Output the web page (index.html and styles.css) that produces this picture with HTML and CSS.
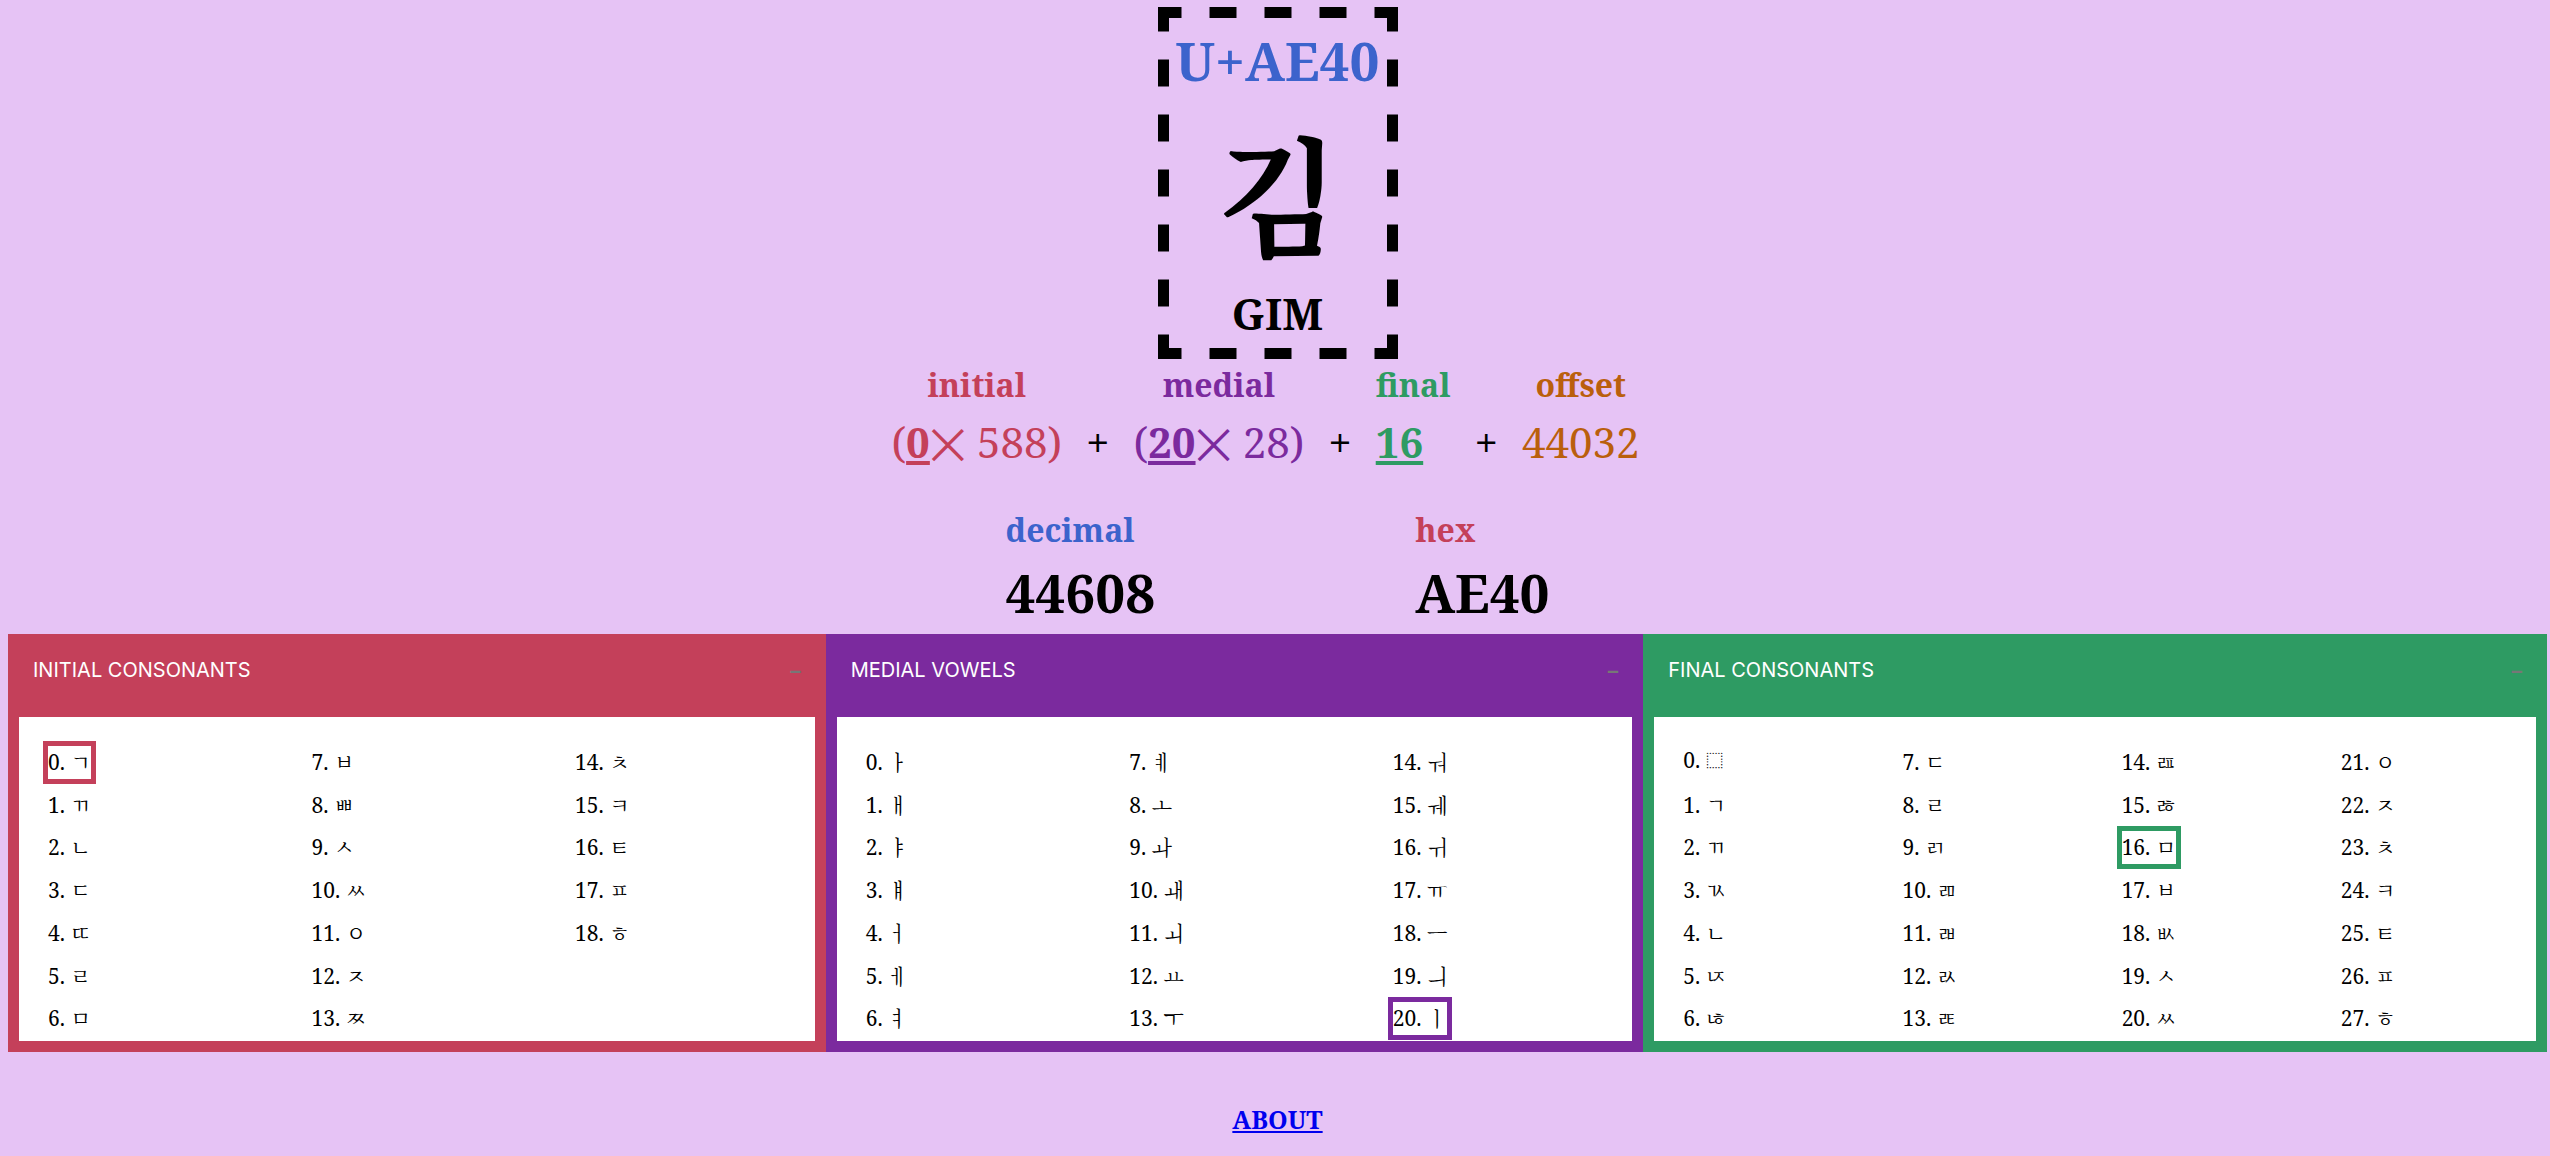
FILE: index.html
```
<!DOCTYPE html>
<html lang="en">
<head>
<meta charset="utf-8">
<title>Hangul syllable composer</title>
<link rel="stylesheet" href="styles.css">
</head>
<body>
<main>
  <section class="card">
    <h1 class="codepoint">U+AE40</h1>
    <div class="syllable" lang="ko">김</div>
    <h2 class="roman">GIM</h2>
  </section>

  <section class="formula">
    <div class="term initial"><h3 class="label">initial</h3><p class="value">(<b>0</b>✕ 588)</p></div>
    <span class="plus">+</span>
    <div class="term medial"><h3 class="label">medial</h3><p class="value">(<b>20</b>✕ 28)</p></div>
    <span class="plus">+</span>
    <div class="term final"><h3 class="label">final</h3><p class="value"><b>16</b></p></div>
    <span class="plus">+</span>
    <div class="term offset"><h3 class="label">offset</h3><p class="value">44032</p></div>
  </section>

  <section class="results">
    <div class="result decimal"><h3 class="label">decimal</h3><p class="total">44608</p></div>
    <div class="result hex"><h3 class="label">hex</h3><p class="total">AE40</p></div>
  </section>

  <section class="panels">
    <article class="panel panel-initial">
      <header class="bar"><span>INITIAL CONSONANTS</span><button class="toggle" type="button" aria-label="Collapse">–</button></header>
      <ul class="letters">
        <li class="selected">0. ㄱ</li><li>1. ㄲ</li><li>2. ㄴ</li><li>3. ㄷ</li><li>4. ㄸ</li><li>5. ㄹ</li><li>6. ㅁ</li>
        <li>7. ㅂ</li><li>8. ㅃ</li><li>9. ㅅ</li><li>10. ㅆ</li><li>11. ㅇ</li><li>12. ㅈ</li><li>13. ㅉ</li>
        <li>14. ㅊ</li><li>15. ㅋ</li><li>16. ㅌ</li><li>17. ㅍ</li><li>18. ㅎ</li>
      </ul>
    </article>
    <article class="panel panel-medial">
      <header class="bar"><span>MEDIAL VOWELS</span><button class="toggle" type="button" aria-label="Collapse">–</button></header>
      <ul class="letters">
        <li>0. ㅏ</li><li>1. ㅐ</li><li>2. ㅑ</li><li>3. ㅒ</li><li>4. ㅓ</li><li>5. ㅔ</li><li>6. ㅕ</li>
        <li>7. ㅖ</li><li>8. ㅗ</li><li>9. ㅘ</li><li>10. ㅙ</li><li>11. ㅚ</li><li>12. ㅛ</li><li>13. ㅜ</li>
        <li>14. ㅝ</li><li>15. ㅞ</li><li>16. ㅟ</li><li>17. ㅠ</li><li>18. ㅡ</li><li>19. ㅢ</li><li class="selected">20. ㅣ</li>
      </ul>
    </article>
    <article class="panel panel-final">
      <header class="bar"><span>FINAL CONSONANTS</span><button class="toggle" type="button" aria-label="Collapse">–</button></header>
      <ul class="letters">
        <li class="empty">0. ⬚</li><li>1. ㄱ</li><li>2. ㄲ</li><li>3. ㄳ</li><li>4. ㄴ</li><li>5. ㄵ</li><li>6. ㄶ</li>
        <li>7. ㄷ</li><li>8. ㄹ</li><li>9. ㄺ</li><li>10. ㄻ</li><li>11. ㄼ</li><li>12. ㄽ</li><li>13. ㄾ</li>
        <li>14. ㄿ</li><li>15. ㅀ</li><li class="selected">16. ㅁ</li><li>17. ㅂ</li><li>18. ㅄ</li><li>19. ㅅ</li><li>20. ㅆ</li>
        <li>21. ㅇ</li><li>22. ㅈ</li><li>23. ㅊ</li><li>24. ㅋ</li><li>25. ㅌ</li><li>26. ㅍ</li><li>27. ㅎ</li>
      </ul>
    </article>
  </section>
</main>
<footer class="footer"><a href="#about">ABOUT</a></footer>
</body>
</html>
```
FILE: styles.css
```
:root {
  --red: #c4405a;
  --purple: #7b2a9e;
  --green: #2e9b63;
  --blue: #3c63cc;
  --orange: #ba5f0d;
}

* { box-sizing: border-box; }

body {
  margin: 7px 3px 0 8px;
  background: #e6c3f5;
  color: #000;
  font-family: "Noto Serif", "Noto Sans Symbols2", "Noto Sans Symbols 2", "Noto Sans Symbols", "Noto Serif CJK KR", "Noto Sans CJK KR", serif;
  font-size: 21px;
}

h1, h2, h3, p, ul { margin: 0; padding: 0; }

/* Syllable card with a wide dashed frame */
.card {
  width: 240px;
  margin: 0 auto;
  padding: 18px 11px 16px;
  text-align: center;
  background:
    linear-gradient(90deg, transparent 14px, #000 14px 41px, transparent 41px) center top / 55px 11px repeat-x,
    linear-gradient(90deg, transparent 14px, #000 14px 41px, transparent 41px) center bottom / 55px 11px repeat-x,
    linear-gradient(transparent 14px, #000 14px 41px, transparent 41px) left center / 11px 55px repeat-y,
    linear-gradient(transparent 14px, #000 14px 41px, transparent 41px) right center / 11px 55px repeat-y;
}
.codepoint { color: var(--blue); font-size: 53px; line-height: 72px; }
.syllable {
  font-family: "Noto Serif CJK KR", "Noto Sans CJK KR", serif;
  font-size: 128px;
  font-weight: bold;
  line-height: 188px;
}
.roman { font-size: 43px; line-height: 58px; }

/* Formula */
.formula {
  display: flex;
  justify-content: center;
  align-items: flex-end;
  gap: 24px;
  margin-top: 4px;
  padding-right: 24px;
}
.term { display: flex; flex-direction: column; align-items: center; }
.label { font-size: 32px; line-height: 44px; }
.value, .plus { font-size: 42px; line-height: 70px; }
.value b { text-decoration: underline; }
.initial, .hex .label { color: var(--red); }
.medial { color: var(--purple); }
.final { color: var(--green); align-items: flex-start; }
.offset { color: var(--orange); }
.decimal .label { color: var(--blue); }

/* Results */
.results {
  display: flex;
  justify-content: center;
  gap: 260px;
  margin-top: 31px;
}
.total { font-size: 53px; font-weight: bold; line-height: 82px; }

/* Letter panels */
.panels { display: grid; grid-template-columns: 19fr 19fr 21fr; }
.panel { --columns: 3; padding: 0 11px 11px; background: var(--tone); }
.panel-initial { --tone: var(--red); }
.panel-medial { --tone: var(--purple); }
.panel-final { --tone: var(--green); --columns: 4; }
.bar {
  display: flex;
  justify-content: space-between;
  padding: 22px 14px 32px;
  color: #fff;
  font-family: Inter, sans-serif;
  font-size: 20px;
  line-height: 29px;
}
.toggle {
  padding: 0;
  border: 0;
  background: none;
  color: #777;
  font: 600 21px/29px Inter, sans-serif;
}
.letters {
  display: grid;
  grid-auto-flow: column;
  grid-template-rows: repeat(7, 1fr);
  grid-template-columns: repeat(var(--columns), 1fr);
  column-gap: 21px;
  min-height: 324px;
  padding: 24px 2px 1px 24px;
  background: #fff;
  list-style: none;
}
.letters li {
  justify-self: start;
  border: 5px solid transparent;
  line-height: 32px;
  white-space: nowrap;
}
.letters .empty { line-height: 28px; }
.letters .selected { border-color: var(--tone); }

.footer {
  margin-top: 50px;
  text-align: center;
  font-size: 25px;
  font-weight: bold;
  line-height: 34px;
}
.footer a { color: #00e; }
```
